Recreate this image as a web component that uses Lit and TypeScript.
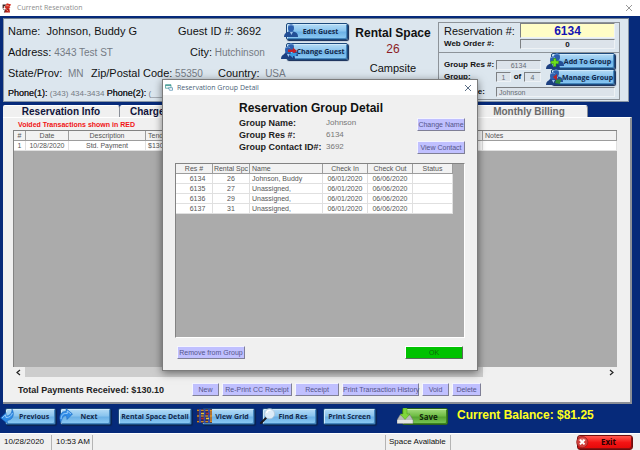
import { LitElement, html, svg, css, nothing, TemplateResult } from "lit";
import { customElement, property } from "lit/decorators.js";
import { classMap } from "lit/directives/class-map.js";

type IconName =
  | "person" | "swap" | "add" | "manage" | "prev" | "next"
  | "grid" | "find" | "drive" | "exit" | "app" | "form";

const person = (x: number, y: number, tone = "#234f96") => svg`
  <g transform="translate(${x} ${y})">
    <path d="M0 13 C0 9 3 8 5 7.5 L9 7.5 C12 8 14 9 14 13 Z" fill=${tone} />
    <ellipse cx="7" cy="4" rx="3" ry="3.8" fill="#2c5fae" />
    <path d="M5 2 C6 0.6 8 0.6 9.2 2" stroke="#7fa8dc" stroke-width="0.8" fill="none" />
    <path d="M6 8 L7.4 11 L9 8 Z" fill="#9dc4ee" />
  </g>`;

const ICONS: Record<IconName, TemplateResult> = {
  person: svg`${person(3, 1)}`,
  swap: svg`${person(3, 0)}${person(0, 3, "#1c3f80")}
    <path d="M7 6.5 H12 V4.5 L16 8 L12 11 V9 H7 Z" fill="#c2202a" />
    <path d="M16 10 H12 V9 L8 11.5 L12 15 V13 H15 Z" fill="#3a9be0" />`,
  add: svg`${person(4, 0)}${person(0, 3, "#1c3f80")}
    <path d="M5 8 H7.5 V5.5 H10 V8 H12.5 V10.8 H10 V13.5 H7.5 V10.8 H5 Z" fill="#6fe01c" stroke="#2c8a10" stroke-width="0.5" />`,
  manage: svg`${person(3, 0)}${person(0, 3, "#1c3f80")}
    <path d="M7 8 L11 5 L11 12 Z" fill="#b3262c" />
    <path d="M10 11 L15 10 L14 15 L9 14 Z" fill="#2f8a3a" />`,
  prev: svg`
    <path d="M12 1 C15 6 13 12 7 12.5 L7.5 15.5 L0.5 10 L6 4.5 L6.5 8 C10 8 12 5 12 1 Z" fill="#2f8be6" stroke="#1560b8" stroke-width="0.5" />
    <path d="M2 10 L5.4 6.8 L6 9.5 C9.5 9.5 11.5 8 12.4 5" stroke="#9fd2ff" stroke-width="0.9" fill="none" />`,
  next: svg`
    <path d="M6 15 C3 8 6 3 11 3.5 L11 0.5 L17.5 6 L12 11.5 L11.6 8 C8 7.5 7 10 6 15 Z" fill="#2f8be6" stroke="#1560b8" stroke-width="0.5" />
    <path d="M6 11 C6.5 7 8 5 12.3 5.5 L12.3 3 L16 6" stroke="#9fd2ff" stroke-width="0.9" fill="none" />`,
  grid: svg`
    <rect x="0" y="1" width="15" height="14" fill="#3a2a4c" />
    <path d="M0 2.4 H15 M0 8 H15 M0 13.6 H15" stroke="#c98a1e" stroke-width="1.4" />
    <path d="M3 1 V15 M7.5 1 V15 M12 1 V15" stroke="#2c49b4" stroke-width="1.8" />
    <path d="M4 5.5 H7 M9 10.5 H12" stroke="#e2c53a" stroke-width="1.6" />
    <path d="M9 5.5 H12 M4 10.5 H7" stroke="#b02c2c" stroke-width="1.4" />
    <path d="M14 2 V14" stroke="#e0922a" stroke-width="1.4" />`,
  find: svg`
    <path d="M4 15 L9 10" stroke="#1a1a22" stroke-width="2" stroke-linecap="round" />
    <circle cx="12.6" cy="5.8" r="5" fill="#dcecf8" stroke="#b4c8d8" stroke-width="0.9" />
    <path d="M9.6 5 C10 3 11.6 2 13.6 2.2" stroke="#fff" stroke-width="1.4" fill="none" />`,
  drive: svg`
    <path d="M3 7 H13 L16 12 V15.5 H0 V12 Z" fill="#b9bcba" stroke="#6e726f" stroke-width="0.5" />
    <path d="M0.4 12 H15.6 V15.2 H0.4 Z" fill="#e3e5e3" />
    <path d="M6 0 H10 V6 H13 L8 11.5 L3 6 H6 Z" fill="#7fd63a" stroke="#4a9a1c" stroke-width="0.5" />`,
  exit: svg`
    <circle cx="8" cy="8" r="7.4" fill="#d0403c" stroke="#8d1a18" stroke-width="0.8" />
    <path d="M2.6 6 C4 2 12 2 13.4 6" fill="#ec8a84" opacity="0.7" />
    <path d="M5 5 L11 11 M11 5 L5 11" stroke="#fff" stroke-width="2.6" />`,
  app: svg`
    <path d="M1 2 H7 L5 5 H3 V8 H1 Z" fill="#3a2320" />
    <path d="M8 0 L15 2 L12 6 L14 7 L9 9 L4 7 Z" fill="#d3291c" />
    <path d="M6 8 H12 L13 15 H4 Z" fill="#b51c14" />
    <path d="M7 4 H11 M7 10 L10 13" stroke="#f0b89a" stroke-width="1.4" />
    <path d="M2 9 L5 12 L4 15" stroke="#3a2320" stroke-width="1.4" fill="none" />`,
  form: svg`
    <path d="M1 3 H12 V10 H1 Z" fill="#eef8f6" stroke="#2f8f88" stroke-width="1.3" />
    <path d="M1 4 H12" stroke="#2f8f88" stroke-width="2" />
    <path d="M7 9 H15 V14 H9 Z" fill="#fff" stroke="#3b7fa6" stroke-width="1.3" />`,
};

const icon = (name: IconName, cls = "ico") =>
  html`<svg class=${cls} viewBox="0 0 18 17" aria-hidden="true">${ICONS[name]}</svg>`;

@customElement("gloss-button")
class GlossButton extends LitElement {
  @property() label = "";
  @property() icon: IconName | "" = "";
  @property() tone = "blue";

  static styles = css`
    :host { display: block; position: relative; }
    .btn {
      box-sizing: border-box; display: block; width: 100%; height: 17px; margin: 0; padding: 0 2px;
      border: 1px solid #1d4a7c; border-radius: 2px;
      background: linear-gradient(#b5dcf6, #8ac4ee 45%, #6cb1e6 55%, #8ecbf4);
      box-shadow: inset 1px 1px 0 #cfe9fb, inset -1px -1px 0 #4486be, 1px 1px 1px #0b2350;
      color: #14294a; font: bold 7px/14px "Open Sans", "Noto Sans", sans-serif;
      text-align: center; white-space: nowrap;
    }
    .with-icon { padding-left: 9px; }
    :host([compact]) .btn { height: 16px; line-height: 13px; padding: 0 0 0 9px; }
    .green {
      background: linear-gradient(#a4dc7c, #6fbd45 45%, #57a632 55%, #7cc957);
      border-color: #2c641a; box-shadow: inset 1px 1px 0 #c6efab, inset -1px -1px 0 #3b8320;
      color: #12270a; font-size: 8px;
    }
    .red {
      height: 15px; border-color: #6d0d0d; border-radius: 3px;
      background: linear-gradient(#ff5a50, #f41414 50%, #e30808);
      box-shadow: inset -1px -1px 0 #8c1010; color: #2a0000; font-size: 8px; line-height: 12px;
    }
    .ico { position: absolute; left: -5px; top: 0; width: 18px; height: 17px; }
    .red + .ico { left: -1px; top: 1px; width: 14px; height: 13px; }
  `;

  render() {
    return html`
      <button type="button" class=${classMap({ btn: true, "with-icon": !!this.icon, [this.tone]: true })}>${this.label}</button>
      ${this.icon ? icon(this.icon) : nothing}`;
  }
}

const MEMBERS = [
  ["6134", "26", "Johnson, Buddy"],
  ["6135", "27", "Unassigned,"],
  ["6136", "29", "Unassigned,"],
  ["6137", "31", "Unassigned,"],
];

const TABS = ["Reservation Info", "Charges", "", "", "Monthly Billing"];

const ACTIONS = ["New", "Re-Print CC Receipt", "Receipt", "Print Transaction History", "Void", "Delete"];

@customElement("app-root")
class AppRoot extends LitElement {
  static styles = css`
    * { box-sizing: border-box; }
    :host {
      display: flex; flex-direction: column; position: relative; min-height: 100vh;
      background: #062a7a; color: #111;
      font: 7px/10px "Liberation Sans", Arial, sans-serif;
    }
    input, button { font: inherit; margin: 0; }

    .titlebar { display: flex; align-items: center; gap: 4px; height: 16px; padding: 0 7px 0 2px; background: #fff; color: #8d8d8d; }
    .caption { flex: 1; font: 7px/14px "Open Sans", "Noto Sans", sans-serif; }
    .app-ico { width: 11px; height: 11px; }
    .close { width: 8px; height: 8px; padding: 0; border: 0; background: none; display: block; color: inherit; }
    .close svg { display: block; width: 8px; height: 8px; }

    .guest {
      display: grid; grid-template-columns: 1fr 68px 84px 182px; column-gap: 3px;
      margin: 2px 11px 0 3px; padding: 2px 8px 2px 4px; height: 84px;
      background: #dce6ee; border: 1px solid #8a97a6; border-top-color: #6d7c90;
    }
    .facts { white-space: nowrap; min-width: 0; font-size: 10px; line-height: 20px; color: #757b84; }
    .facts b { font-size: 11px; font-weight: normal; color: #111; }
    .fact-row { display: grid; grid-template-columns: 170px auto; }
    .city { padding-left: 12px; }
    .thirds { grid-template-columns: 83px 127px auto; }
    .facts .phones { font-size: 8px; line-height: 18px; }
    .facts .phones b { font-size: 9px; color: #222; text-shadow: 0 0 0 #222; }

    .guest-buttons { display: flex; flex-direction: column; gap: 3px; padding: 2px 0 0 6px; }
    .space { text-align: center; line-height: 16px; padding-top: 3px; font-size: 12px; }
    .space-title { font-size: 12px; font-weight: bold; line-height: 18px; white-space: nowrap; }
    .space-no { color: #8c1c24; line-height: 14px; }
    .space-kind { font-size: 11px; line-height: 24px; }

    .resbox { border: 1px solid #8d9399; margin-top: 1px; height: 78px; font-weight: bold; font-size: 8px; }
    .res-top { display: grid; grid-template-columns: 1fr 95px; row-gap: 1px; align-items: center; padding: 0 4px 3px 5px; border-bottom: 1px solid #8d9399; }
    .res-top .big { font-size: 11px; font-weight: normal; }
    .field {
      width: 100%; min-width: 0; height: 10px; padding: 0 2px; border: 1px solid; border-color: #7d8083 #eef2f5 #eef2f5 #7d8083;
      border-radius: 0; background: #dce3ea; color: #666c74; font-size: 7px; font-weight: normal; line-height: 8px; outline: none;
    }
    .mid { text-align: center; }
    .strong { font-weight: bold; color: #111; font-size: 8px; }
    .number { height: 15px; background: #fffdc6; color: #1414b4; font-size: 12px; font-weight: bold; line-height: 13px; }
    .res-low { display: grid; grid-template-columns: 52px 45px minmax(0, 1fr); padding: 0 4px 0 5px; align-items: start; }
    .group-labels, .group-fields { display: flex; flex-direction: column; gap: 2px; padding-top: 7px; white-space: nowrap; }
    .group-fields .pair { display: grid; grid-template-columns: 15px 1fr 17px; text-align: center; }
    .group-buttons { padding-left: 10px; display: flex; flex-direction: column; }
    .name-row { display: grid; grid-template-columns: 52px 1fr; padding: 2px 4px 0 5px; white-space: nowrap; }

    .tabs { display: flex; margin: 3px 0 0 3px; height: 12px; }
    .tab {
      width: 117px; padding: 0; border: 1px solid #8a8f98; border-width: 0 1px 0 0; border-radius: 2px 3px 0 0;
      background: #f0f0f0; border-top: 1px solid #fff; color: #10143c; font-size: 10px; font-weight: bold; line-height: 11px;
    }
    .tab:nth-child(2) { text-align: left; padding-left: 10px; }
    .tab:last-child { color: #6b6b6b; }

    .sheet {
      flex: 1; display: flex; flex-direction: column; margin: 0 8px 0 3px; padding: 2px 13px 6px 10px;
      background: #f0f0f0; border-right: 2px solid #8b8f96; border-bottom: 2px solid #8b8f96; border-top: 1px solid #fff;
    }
    .void-note { margin: 0 0 0 5px; color: #f01414; font-size: 7px; line-height: 10px; font-weight: bold; }
    .grid-box { flex: 1; background: #ababab; border: 1px solid #838383; border-width: 1px 0 0 1px; }
    table { border-collapse: separate; border-spacing: 0; table-layout: fixed; width: 100%; background: #fff; }
    th, td { height: 10px; padding: 0 2px; font-weight: normal; line-height: 9px; text-align: center; white-space: nowrap; overflow: hidden; color: #555; }
    th { background: #f2f2f2; border-right: 1px solid #9d9d9d; border-bottom: 1px solid #9d9d9d; }
    td { border-right: 1px solid #e0e0e0; border-bottom: 1px solid #e0e0e0; }
    .left { text-align: left; }
    .c-num { width: 12px; } .c-date { width: 43px; } .c-desc { width: 77px; } .c-tend { width: 45px; } .c-notes { width: 134px; }
    .hscroll { display: flex; align-items: center; height: 11px; background: #f0f0f0; color: #222; }
    .hscroll svg { width: 12px; height: 9px; flex: none; }
    .track { flex: 1; align-self: stretch; }
    .thumb { width: 79%; height: 10px; background: #cdcdcd; }

    .foot { display: flex; align-items: center; gap: 3px; padding-top: 5px; margin-left: 5px; }
    .total { width: 171px; font-size: 9px; line-height: 12px; font-weight: bold; color: #222; }
    .lilac {
      height: 13px; padding: 0; border: 1px solid; border-color: #f4f4ff #7f7f96 #7f7f96 #f4f4ff;
      background: #c0c0ff; color: #55558a; line-height: 10px; white-space: nowrap; flex: none;
    }
    .w26 { width: 27px; } .w70 { width: 70px; } .w43 { width: 44px; } .w77 { width: 77px; } .w29 { width: 29px; }

    .bar { display: flex; align-items: flex-start; height: 29px; padding: 4px 5px 0; }
    .previous, .next { width: 51px; }
    .next { margin: 0 7px 0 4px; }
    .detail { width: 74px; margin-right: 10px; }
    .view { width: 53px; margin-right: 7px; }
    .find { width: 55px; margin-right: 6px; }
    .print { width: 53px; margin-right: 26px; }
    .save { width: 46px; margin-right: 9px; }
    .balance { color: #ffff1e; font-size: 12px; line-height: 14px; font-weight: bold; white-space: nowrap; }

    .status { display: flex; align-items: center; height: 17px; background: #f0f0f0; border-top: 1px solid #fff; font-size: 8px; line-height: 14px; color: #111; }
    .cell { padding: 0 4px; border-right: 1px solid #b4b4b4; height: 15px; white-space: nowrap; }
    .stamp { width: 52px; } .clock { width: 41px; } .fill { flex: 1; }
    .avail { width: 65px; padding: 0 3px; }
    .exit { width: 56px; margin: 0 7px 0 126px; }

    .dialog {
      position: absolute; top: 79px; left: 50%; margin-left: -158px; width: 316px; height: 292px;
      display: flex; flex-direction: column; background: #f0f0f0; border: 1px solid #7c7c7c;
      box-shadow: 0 2px 8px rgba(0, 0, 0, 0.5);
    }
    .dialog .titlebar { height: 15px; padding: 0 5px 0 2px; color: #4a5f78; gap: 3px; }
    .dialog .app-ico { width: 9px; height: 9px; }
    .d-body { flex: 1; display: flex; flex-direction: column; padding: 5px 12px 11px; }
    .d-head { display: flex; justify-content: space-between; margin-left: 64px; height: 63px; }
    h2 { margin: 0 0 1px; font-size: 12px; line-height: 16px; white-space: nowrap; }
    dl { display: grid; grid-template-columns: 87px auto; margin: 0; line-height: 12px; }
    dt { font-size: 9px; font-weight: bold; white-space: nowrap; color: #222; }
    dd { margin: 0; font-size: 8px; color: #777; }
    .d-buttons { display: flex; flex-direction: column; gap: 10px; padding-top: 18px; }
    .d-buttons .lilac { width: 48px; }
    .d-grid { border-right: 1px solid #fff; border-bottom: 1px solid #fff; }
    .members { width: 277px; }
    .m1, .m2 { width: 37px; } .m3 { width: 73px; } .m4, .m5 { width: 45px; }
    .members td:nth-child(1) { padding-left: 9px; }
    .members th:nth-child(2) { padding: 0; }
    .d-foot { display: flex; justify-content: space-between; padding: 8px 2px 0 2px; }
    .d-foot .lilac { width: 68px; }
    .d-foot .ok { width: 58px; background: #00c200; border-color: #fff #5a6a5a #5a6a5a #fff; color: #0a6a0a; }
  `;

  private closeIcon() {
    return html`<button class="close" type="button" aria-label="Close">
      <svg viewBox="0 0 8 8"><path d="M1 1 L7 7 M7 1 L1 7" stroke="currentColor" stroke-width="0.9" /></svg></button>`;
  }

  private header() {
    return html`<section class="guest">
      <div class="facts">
        <div class="fact-row"><span><b>Name:&nbsp; Johnson, Buddy G</b></span><span><b>Guest ID #: 3692</b></span></div>
        <div class="fact-row"><span><b>Address:</b> 4343 Test ST</span><span class="city"><b>City:</b> Hutchinson</span></div>
        <div class="fact-row thirds">
          <span><b>State/Prov:</b>&nbsp; MN</span><span><b>Zip/Postal Code:</b> 55350</span><span><b>Country:</b>&nbsp; USA</span>
        </div>
        <div class="phones"><b>Phone(1):</b> (343) 434-3434 <b>Phone(2):</b> (___</div>
      </div>
      <div class="guest-buttons">
        <gloss-button label="Edit Guest" icon="person"></gloss-button>
        <gloss-button label="Change Guest" icon="swap"></gloss-button>
      </div>
      <div class="space">
        <div class="space-title">Rental Space</div>
        <div class="space-no">26</div>
        <div class="space-kind">Campsite</div>
      </div>
      <div class="resbox">
        <div class="res-top">
          <label class="big" for="res">Reservation #:</label><input id="res" class="field mid number" readonly value="6134" />
          <label for="web">Web Order #:</label><input id="web" class="field mid strong" readonly value="0" />
        </div>
        <div class="res-low">
          <div class="group-labels"><label for="gres">Group Res #:</label><label for="gidx">Group:</label></div>
          <div class="group-fields">
            <input id="gres" class="field mid" readonly value="6134" />
            <div class="pair">
              <input id="gidx" class="field mid" readonly value="1" /><label for="gcount">of</label>
              <input id="gcount" class="field mid" readonly value="4" />
            </div>
          </div>
          <div class="group-buttons">
            <gloss-button compact label="Add To Group" icon="add"></gloss-button>
            <gloss-button compact label="Manage Group" icon="manage"></gloss-button>
          </div>
        </div>
        <div class="name-row"><label for="gname">Grp Name:</label><input id="gname" class="field" readonly value="Johnson" /></div>
      </div>
    </section>`;
  }

  private payments() {
    const widths = ["w26", "w70", "w43", "w77", "w26", "w29"];
    return html`
      <div class="tabs" role="tablist">${TABS.map((t) => html`<button class="tab" type="button" role="tab">${t}</button>`)}</div>
      <section class="sheet">
        <p class="void-note">Voided Transactions shown in RED</p>
        <div class="grid-box">
          <table>
            <colgroup><col class="c-num" /><col class="c-date" /><col class="c-desc" /><col class="c-tend" /><col /><col class="c-notes" /></colgroup>
            <thead><tr><th>#</th><th>Date</th><th>Description</th><th class="left">Tendered</th><th></th><th class="left">Notes</th></tr></thead>
            <tbody><tr><td>1</td><td>10/28/2020</td><td>Std. Payment</td><td class="left">$130.10</td><td></td><td></td></tr></tbody>
          </table>
        </div>
        <div class="hscroll">
          <svg viewBox="0 0 12 9"><path d="M7 2 L4 4.5 L7 7" stroke="currentColor" stroke-width="1.2" fill="none" /></svg>
          <div class="track"><div class="thumb"></div></div>
          <svg viewBox="0 0 12 9"><path d="M5 2 L8 4.5 L5 7" stroke="currentColor" stroke-width="1.2" fill="none" /></svg>
        </div>
        <div class="foot">
          <span class="total">Total Payments Received: $130.10</span>
          ${ACTIONS.map((a, i) => html`<button class="lilac ${widths[i]}" type="button">${a}</button>`)}
        </div>
      </section>`;
  }

  private dialog() {
    return html`<div class="dialog" role="dialog" aria-labelledby="dlg">
      <div class="titlebar">${icon("form", "app-ico")}<span class="caption">Reservation Group Detail</span>${this.closeIcon()}</div>
      <div class="d-body">
        <div class="d-head">
          <div>
            <h2 id="dlg">Reservation Group Detail</h2>
            <dl><dt>Group Name:</dt><dd>Johnson</dd><dt>Group Res #:</dt><dd>6134</dd><dt>Group Contact ID#:</dt><dd>3692</dd></dl>
          </div>
          <div class="d-buttons">
            <button class="lilac" type="button">Change Name</button>
            <button class="lilac" type="button">View Contact</button>
          </div>
        </div>
        <div class="grid-box d-grid">
          <table class="members">
            <colgroup><col class="m1" /><col class="m2" /><col class="m3" /><col class="m4" /><col class="m5" /><col /></colgroup>
            <thead><tr><th>Res #</th><th>Rental Spc</th><th class="left">Name</th><th>Check In</th><th>Check Out</th><th>Status</th></tr></thead>
            <tbody>${MEMBERS.map(([id, spc, name]) => html`<tr>
              <td>${id}</td><td>${spc}</td><td class="left">${name}</td><td>06/01/2020</td><td>06/06/2020</td><td></td></tr>`)}</tbody>
          </table>
        </div>
        <div class="d-foot">
          <button class="lilac" type="button">Remove from Group</button>
          <button class="lilac ok" type="button">OK</button>
        </div>
      </div>
    </div>`;
  }

  render() {
    return html`
      <header class="titlebar">${icon("app", "app-ico")}<span class="caption">Current Reservation</span>${this.closeIcon()}</header>
      ${this.header()}
      ${this.payments()}
      <nav class="bar">
        <gloss-button class="previous" label="Previous" icon="prev"></gloss-button>
        <gloss-button class="next" label="Next" icon="next"></gloss-button>
        <gloss-button class="detail" label="Rental Space Detail"></gloss-button>
        <gloss-button class="view" label="View Grid" icon="grid"></gloss-button>
        <gloss-button class="find" label="Find Res" icon="find"></gloss-button>
        <gloss-button class="print" label="Print Screen"></gloss-button>
        <gloss-button class="save" label="Save" icon="drive" tone="green"></gloss-button>
        <span class="balance">Current Balance: $81.25</span>
      </nav>
      <footer class="status">
        <span class="cell stamp">10/28/2020</span><span class="cell clock">10:53 AM</span><span class="cell fill"></span>
        <span class="cell avail">Space Available</span>
        <gloss-button class="exit" label="Exit" icon="exit" tone="red"></gloss-button>
      </footer>
      ${this.dialog()}`;
  }
}
